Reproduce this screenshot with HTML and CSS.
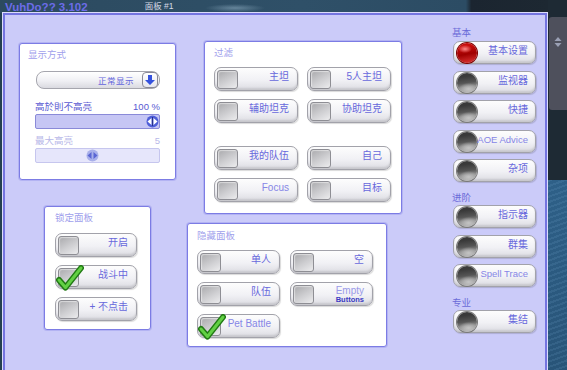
FILE: index.html
```html
<!DOCTYPE html>
<html lang="zh">
<head>
  <meta charset="UTF-8">
  <title>VuhDo 面板 #1</title>
  <link rel="stylesheet" href="styles.css">
</head>
<body>
  <div class="screen">
    <div class="main">
      <div class="titlebar">
        <span class="app-title">VuhDo?? 3.102</span>
        <span class="panel-name">面板 #1</span>
      </div>

      <div class="frame">
        <!-- left column -->
        <div class="col col-left">
          <div class="box box-display">
            <div class="legend">显示方式</div>
            <div class="dropdown">
              <span class="dropdown-text">正常显示</span>
              <span class="dropdown-btn">
                <svg width="12" height="12" viewBox="0 0 12 12"><path d="M4 1h4v5h3l-5 5-5-5h3z" fill="#3552de"/></svg>
              </span>
            </div>
            <div class="slider-label"><span>高於則不高亮</span><span>100 %</span></div>
            <div class="slider">
              <svg class="thumb" width="13" height="13" viewBox="0 0 13 13"><circle cx="6.5" cy="6.5" r="6" fill="#4f5ed8"/><path d="M1.5 6.5 5.5 3v7z M11.5 6.5 7.5 3v7z" fill="#fff"/><path d="M6.5 2v9" stroke="#27308a" stroke-width="1"/></svg>
            </div>
            <div class="slider-label dim"><span>最大高亮</span><span>5</span></div>
            <div class="slider dim">
              <svg class="thumb" width="13" height="13" viewBox="0 0 13 13"><circle cx="6.5" cy="6.5" r="6" fill="#a9b0ea"/><path d="M1.5 6.5 5.5 3v7z M11.5 6.5 7.5 3v7z" fill="#5b66d4"/></svg>
            </div>
          </div>

          <div class="box box-lock">
            <div class="legend">锁定面板</div>
            <div class="stack">
              <div class="toggle"><span class="knob"></span><span class="label">开启</span></div>
              <div class="toggle"><span class="knob"><svg class="check" width="28" height="26" viewBox="0 0 28 26"><path d="M3 15 9.5 22.5 25 3" fill="none" stroke="#217a14" stroke-width="6" stroke-linecap="round" stroke-linejoin="round"/><path d="M3 15 9.5 22.5 25 3" fill="none" stroke="#62d044" stroke-width="3" stroke-linecap="round" stroke-linejoin="round"/></svg></span><span class="label">战斗中</span></div>
              <div class="toggle"><span class="knob"></span><span class="label">+ 不点击</span></div>
            </div>
          </div>
        </div>

        <!-- middle column -->
        <div class="col col-mid">
          <div class="box box-filter">
            <div class="legend">过滤</div>
            <div class="grid">
              <div class="toggle"><span class="knob"></span><span class="label">主坦</span></div>
              <div class="toggle"><span class="knob"></span><span class="label">5人主坦</span></div>
              <div class="toggle"><span class="knob"></span><span class="label">辅助坦克</span></div>
              <div class="toggle"><span class="knob"></span><span class="label">协助坦克</span></div>
            </div>
            <div class="grid grid-low">
              <div class="toggle"><span class="knob"></span><span class="label">我的队伍</span></div>
              <div class="toggle"><span class="knob"></span><span class="label">自己</span></div>
              <div class="toggle"><span class="knob"></span><span class="label latin">Focus</span></div>
              <div class="toggle"><span class="knob"></span><span class="label">目标</span></div>
            </div>
          </div>

          <div class="box box-hide">
            <div class="legend">隐藏面板</div>
            <div class="grid">
              <div class="toggle"><span class="knob"></span><span class="label">单人</span></div>
              <div class="toggle"><span class="knob"></span><span class="label">空</span></div>
              <div class="toggle"><span class="knob"></span><span class="label">队伍</span></div>
              <div class="toggle"><span class="knob"></span><span class="label empty"><span class="empty-top">Empty</span><span class="empty-sub">Buttons</span></span></div>
              <div class="toggle"><span class="knob"><svg class="check" width="28" height="26" viewBox="0 0 28 26"><path d="M3 15 9.5 22.5 25 3" fill="none" stroke="#217a14" stroke-width="6" stroke-linecap="round" stroke-linejoin="round"/><path d="M3 15 9.5 22.5 25 3" fill="none" stroke="#62d044" stroke-width="3" stroke-linecap="round" stroke-linejoin="round"/></svg></span><span class="label latin">Pet Battle</span></div>
            </div>
          </div>
        </div>

        <!-- right column: tabs -->
        <div class="col col-right">
          <div class="group-label">基本</div>
          <div class="tabs">
            <div class="tab active"><span class="orb"></span><span class="label">基本设置</span></div>
            <div class="tab"><span class="orb"></span><span class="label">监视器</span></div>
            <div class="tab"><span class="orb"></span><span class="label">快捷</span></div>
            <div class="tab"><span class="orb"></span><span class="label latin">AOE Advice</span></div>
            <div class="tab"><span class="orb"></span><span class="label">杂项</span></div>
          </div>
          <div class="group-label">进阶</div>
          <div class="tabs">
            <div class="tab"><span class="orb"></span><span class="label">指示器</span></div>
            <div class="tab"><span class="orb"></span><span class="label">群集</span></div>
            <div class="tab"><span class="orb"></span><span class="label latin">Spell Trace</span></div>
          </div>
          <div class="group-label">专业</div>
          <div class="tabs">
            <div class="tab"><span class="orb"></span><span class="label">集结</span></div>
          </div>
        </div>
      </div>
    </div>

    <div class="side">
      <div class="side-top">
        <div class="scroll-thumb">
          <svg width="8" height="10" viewBox="0 0 8 10"><path d="M4 0 7.5 4h-7z M4 10 .5 6h7z" fill="#9aa0b4"/></svg>
        </div>
      </div>
      <div class="side-water"></div>
    </div>
  </div>
</body>
</html>
```

FILE: styles.css
```css
* {
  box-sizing: border-box;
}
html, body {
  margin: 0;
}
body {
  width: 567px;
  height: 370px;
  overflow: hidden;
  font-family: "Liberation Sans", "Noto Sans CJK SC", sans-serif;
  background: #24404f;
}
.screen {
  display: flex;
  width: 567px;
  height: 370px;
}
.main {
  width: 548px;
}

/* title strip over the game background */
.titlebar {
  display: flex;
  align-items: center;
  height: 13px;
  padding-left: 5px;
  background:
    radial-gradient(ellipse 30px 4px at 235px 8px, rgba(170, 200, 220, .45), rgba(170, 200, 220, 0)),
    linear-gradient(90deg, #2c4a5f 0, #2f5068 55%, #2c4c64 85%, #1b2530 86%, #1d2832 100%);
}
.app-title {
  font-size: 11.5px;
  font-weight: bold;
  color: #6c6ce8;
  line-height: 12px;
}
.panel-name {
  margin-left: 57px;
  font-size: 8.5px;
  color: #d6dae6;
  line-height: 13px;
}

/* main lavender frame */
.frame {
  display: flex;
  align-items: flex-start;
  width: 544px;
  height: 362px;
  margin-left: 3px;
  border: 2px solid #7474e0;
  border-bottom: 0;
  background: #cbcbf9;
  box-shadow: 0 0 0 1px #dcdcfc;
}
.col {
  display: flex;
  flex-direction: column;
  align-items: flex-start;
}
.col-left {
  width: 171px;
}
.col-mid {
  width: 226px;
}
.col-right {
  width: 85px;
  margin-left: 50px;
}

.box {
  border: 1px solid #7c7ce4;
  border-radius: 3px;
  background: #fff;
  box-shadow: 0 0 0 1px rgba(150, 150, 236, .45);
}
.legend {
  height: 12px;
  line-height: 12px;
  font-size: 9.5px;
  color: #a0a0ec;
}

/* 显示方式 */
.box-display {
  width: 157px;
  height: 137px;
  margin: 28px 0 0 14px;
}
.box-display .legend {
  margin: 5px 0 0 8px;
}
.dropdown {
  display: flex;
  align-items: center;
  justify-content: flex-end;
  width: 124px;
  height: 18px;
  margin: 10px 0 0 16px;
  padding-right: 1px;
  border: 1px solid #a6a6ae;
  border-radius: 8px;
  background: linear-gradient(#ffffff, #f0f0f4 55%, #dadae0);
}
.dropdown-text {
  margin-right: 8px;
  font-size: 8.5px;
  letter-spacing: .5px;
  color: #6464dc;
}
.dropdown-btn {
  display: flex;
  align-items: center;
  justify-content: center;
  width: 16px;
  height: 16px;
  border: 1px solid #8a8a98;
  border-radius: 4px;
  background: linear-gradient(#ffffff, #e6e6ee);
}
.slider-label {
  display: flex;
  justify-content: space-between;
  width: 125px;
  height: 10px;
  margin: 13px 0 0 15px;
  line-height: 10px;
  font-size: 9.5px;
  color: #5a5ad2;
}
.slider-label.dim {
  margin-top: 7px;
  color: #b8b8e8;
}
.slider {
  display: flex;
  align-items: center;
  justify-content: flex-end;
  width: 125px;
  height: 15px;
  margin: 2px 0 0 15px;
  border: 1px solid #8a8ad8;
  border-radius: 2px;
  background: #c6c6f4;
}
.slider.dim {
  justify-content: flex-start;
  padding-left: 50px;
  border-color: #c6c6ee;
  background: #e6e6fb;
}

/* 锁定面板 */
.box-lock {
  width: 107px;
  height: 124px;
  margin: 26px 0 0 39px;
}
.box-lock .legend {
  margin: 5px 0 0 10px;
}
.stack {
  display: flex;
  flex-direction: column;
  gap: 8px;
  width: 82px;
  margin: 9px 0 0 10px;
}

/* 过滤 */
.box-filter {
  width: 198px;
  height: 173px;
  margin: 26px 0 0 28px;
}
.box-filter .legend {
  margin: 5px 0 0 9px;
}
.grid {
  display: grid;
  grid-template-columns: 84px 84px;
  gap: 8px 9px;
  margin: 8px 0 0 9px;
}
.box-filter .grid-low {
  margin-top: 23px;
}

/* 隐藏面板 */
.box-hide {
  width: 200px;
  height: 124px;
  margin: 9px 0 0 11px;
}
.box-hide .legend {
  margin: 6px 0 0 9px;
}
.box-hide .grid {
  grid-template-columns: 83px 83px;
  gap: 8px 10px;
  margin-top: 8px;
}

/* toggle buttons */
.toggle {
  position: relative;
  display: flex;
  align-items: flex-start;
  height: 24px;
  padding: 2px 8px 0 2px;
  border: 1px solid #a2a2aa;
  border-radius: 7px;
  background: linear-gradient(#fdfdfd, #f1f1f5 55%, #dcdce2);
  box-shadow: inset 0 -2px 2px rgba(0, 0, 0, .1), 1px 1px 1px rgba(0, 0, 0, .15);
}
.knob {
  position: relative;
  width: 21px;
  height: 19px;
  border: 1px solid #8e8e94;
  border-radius: 3px;
  background: linear-gradient(150deg, #a9a9ac, #cfcfd2 55%, #ececee);
  box-shadow: inset 1px 1px 1px rgba(255, 255, 255, .5);
}
.check {
  position: absolute;
  left: -3px;
  top: -4px;
}
.label {
  margin-left: auto;
  margin-top: 1px;
  line-height: 12px;
  font-size: 10px;
  color: #6868dc;
  white-space: nowrap;
}
.label.latin {
  color: #8686e6;
}
.empty {
  display: flex;
  flex-direction: column;
  align-items: flex-end;
  margin-top: 1px;
}
.empty-top {
  line-height: 10px;
  font-size: 10px;
  color: #9a9ae8;
}
.empty-sub {
  line-height: 8px;
  font-size: 7.5px;
  font-weight: bold;
  color: #3a3ac2;
}

/* right column tabs */
.group-label {
  height: 10px;
  margin-top: 11px;
  line-height: 10px;
  font-size: 9.5px;
  color: #6a6ad8;
}
.col-right .group-label:first-child {
  margin-top: 13px;
}
.tabs {
  display: flex;
  flex-direction: column;
  gap: 6.5px;
  margin: 2px 0 0 1px;
}
.col-right .tabs:nth-child(2) {
  margin-top: 3px;
}
.tab {
  display: flex;
  align-items: flex-start;
  width: 83px;
  height: 23px;
  padding: 1px 7px 0 3px;
  border: 1px solid #a2a2aa;
  border-radius: 7px;
  background: linear-gradient(#fdfdfd, #f1f1f5 55%, #dcdce2);
  box-shadow: inset 0 -2px 2px rgba(0, 0, 0, .1), 1px 1px 1px rgba(0, 0, 0, .15);
}
.orb {
  flex: none;
  width: 20px;
  height: 20px;
  border-radius: 50%;
  background:
    radial-gradient(ellipse 10px 6px at 58% 80%, #c4c4c4, rgba(196, 196, 196, 0)),
    linear-gradient(172deg, #3a3a3a 20%, #555 48%, #8e8e8e 68%, #b4b4b4);
  box-shadow: 0 0 0 1px #7a7a7a;
}
.tab.active .orb {
  background:
    radial-gradient(ellipse 7px 4px at 40% 30%, #ff8a8a, rgba(255, 138, 138, 0)),
    linear-gradient(170deg, #c80c0c 20%, #a00000 55%, #e03838);
  box-shadow: 0 0 0 1px #800000;
}
.tab .label {
  margin-top: 2px;
}
.tab .label.latin {
  font-size: 9.5px;
}

/* scrollbar + water strip on the right */
.side {
  display: flex;
  flex-direction: column;
  width: 19px;
}
.side-top {
  height: 180px;
  padding-top: 17px;
  background: #1e2a34;
}
.scroll-thumb {
  display: flex;
  justify-content: center;
  width: 18px;
  height: 93px;
  margin-left: 1px;
  padding-top: 20px;
  border-radius: 3px 0 0 3px;
  background: #4e505c;
}
.side-water {
  flex: 1;
  background:
    repeating-linear-gradient(160deg, rgba(120, 170, 210, .15) 0 2px, rgba(0, 0, 0, 0) 2px 5px),
    linear-gradient(#2e6088, #285478);
}
```
